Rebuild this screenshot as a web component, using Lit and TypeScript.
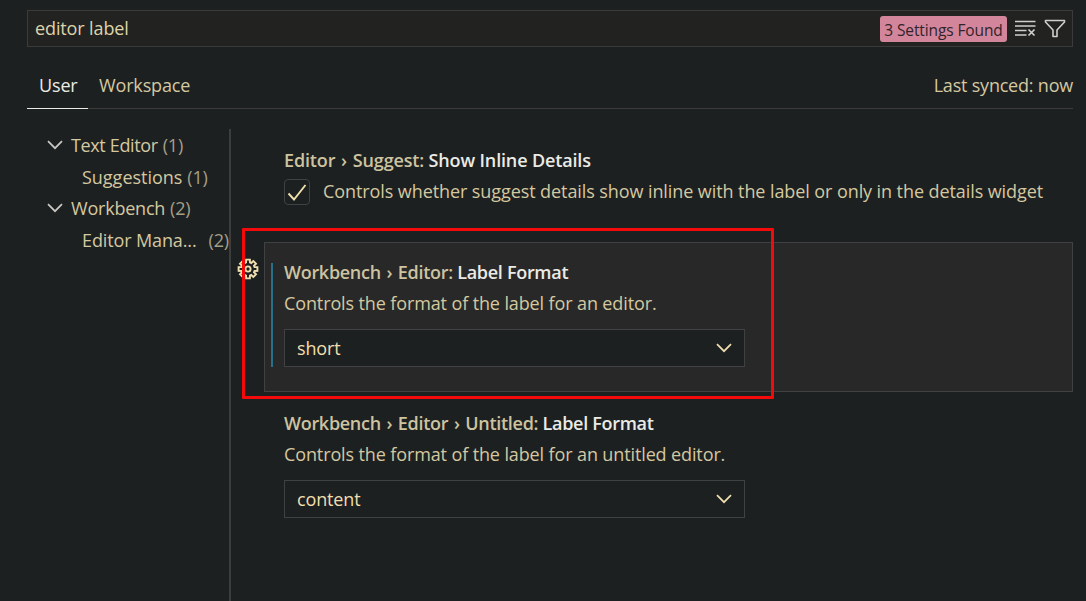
import { LitElement, html, css } from "lit";
import { customElement, property } from "lit/decorators.js";

const chevron = html`<svg class="chevron" width="18" height="12" viewBox="0 0 18 12"><path d="M2 2.2 9 9.2 16 2.2" fill="none" stroke="currentColor" stroke-width="1.7"/></svg>`;

const gearPath = (() => {
  const pts: string[] = [];
  for (let i = 0; i < 8; i++) {
    const a = (i * Math.PI) / 4;
    for (const [r, d] of [[6.8, -0.29], [9.6, -0.2], [9.6, 0.2], [6.8, 0.29]]) {
      pts.push(`${(11 + r * Math.cos(a + d)).toFixed(2)} ${(11 + r * Math.sin(a + d)).toFixed(2)}`);
    }
  }
  return `M${pts.join("L")}Z`;
})();

@customElement("setting-item")
class SettingItem extends LitElement {
  @property() category = "";
  @property() label = "";
  @property() description = "";
  @property() value = "";
  @property({ type: Boolean, reflect: true }) focused = false;
  @property({ type: Boolean, reflect: true }) checkbox = false;

  static styles = css`
    :host { display: block; box-sizing: border-box; position: relative; height: 151px; padding: 14px 19px 0; border: 1px solid transparent; color: #d4c8a0; }
    :host([focused]) { background: #282828; border-color: #3f4142; height: 150px; }
    :host(:not([focused]):not([checkbox])) { padding-top: 15px; }
    .title { height: 31px; line-height: 30px; font-weight: 600; color: #cdc3a0; white-space: pre; letter-spacing: -0.3px; }
    .title b { font-weight: 600; color: #ebebe6; }
    :host([checkbox]) .title { letter-spacing: -0.15px; }
    .sep { margin: 0 1.3px; }
    .desc { display: flex; align-items: center; height: 30px; white-space: pre; letter-spacing: -0.12px; }
    :host([checkbox]) .desc { letter-spacing: -0.085px; }
    .check { box-sizing: border-box; width: 26px; height: 26px; border: 1px solid #3f4142; border-radius: 4px; margin: 2px 13px 0 0; color: #f0dfae; }
    .check svg { display: block; }
    .select { box-sizing: border-box; display: flex; align-items: center; justify-content: space-between; width: 461px; height: 38px; margin-top: 11px; padding: 0 11px 0 12px; border: 1px solid #3f4142; background: #1d2021; color: #f0dfae; letter-spacing: -0.15px; }
    .modified { position: absolute; left: 6px; top: 20px; width: 2px; height: 104px; background: #27708a; }
    .gear { position: absolute; left: -28px; top: 15px; color: #f0dfae; }
  `;

  render() {
    const parts = this.category.split("›");
    return html`
      ${this.focused ? html`<div class="modified"></div>
        <svg class="gear" width="22" height="22" viewBox="0 0 22 22" fill="none" stroke="currentColor" stroke-width="1.9"><path d=${gearPath}/><circle cx="11" cy="11" r="2.6"/></svg>` : null}
      <div class="title">${parts.map((p, i) => html`${i ? html`<span class="sep">›</span>` : null}${p}`)} <b>${this.label}</b></div>
      <div class="desc">${this.checkbox ? html`<span class="check"><svg width="24" height="24" viewBox="0 0 24 24"><path d="M3.500 13.500 9 19.500 20.500 5" fill="none" stroke="currentColor" stroke-width="1.9"/></svg></span>` : null}<span>${this.description}</span></div>
      ${this.checkbox ? null : html`<div class="select"><span>${this.value}</span>${chevron}</div>`}
    `;
  }
}

@customElement("app-root")
class AppRoot extends LitElement {
  static styles = css`
    :host { display: block; position: relative; box-sizing: border-box; width: 1086px; height: 601px; overflow: hidden; padding: 10px 13px 0 27px; background: #1d2021; color: #d4c8a0; font: 18px "Open Sans", sans-serif; }
    .search { box-sizing: border-box; display: flex; align-items: center; height: 37px; padding: 0 6px 0 7px; border: 1px solid #3a3b3a; background: #222321; color: #dfd3aa; }
    .query { flex: 1; padding-bottom: 2px; letter-spacing: -0.12px; }
    .badge { display: flex; align-items: center; justify-content: center; width: 127px; height: 26px; padding-top: 2px; box-sizing: border-box; border-radius: 3px; background: #d3869b; color: #32232a; font-size: 15.500px; letter-spacing: -0.12px; white-space: nowrap; }
    .actions { display: flex; gap: 8px; margin-left: 8px; color: #cfcfcc; }
    .tabs { box-sizing: border-box; display: flex; height: 46px; margin-top: 16px; border-bottom: 1px solid #3a3b3a; line-height: 44px; }
    .tab { letter-spacing: -0.15px; white-space: nowrap; }
    .tab.active { box-sizing: border-box; width: 61px; height: 46px; margin-right: 11px; padding: 0 0 0 12px; border-bottom: 1px solid #ebebe6; color: #ebebe6; }
    .sync { margin-left: auto; letter-spacing: -0.21px; }
    .body { display: grid; grid-template-columns: 204px 1fr; margin-top: 20px; height: 472px; }
    .tree { border-right: 2px solid #3c3d3d; }
    .row { display: flex; align-items: center; height: 31.700px; padding-left: 19px; white-space: pre; }
    .row .chevron { margin-right: 7px; color: #c8c8c4; }
    .row.child { padding-left: 55px; }
    .t1 { letter-spacing: -0.36px; }
    .t2 { letter-spacing: -0.02px; }
    .t3 { letter-spacing: -0.22px; }
    .t4 { letter-spacing: -0.12px; }
    .count { color: #a59f88; margin-left: 5px; letter-spacing: -0.2px; }
    .wide { margin-left: 12px; }
    .settings { padding: 1px 0 0 33px; }
    .first { height: 112px; }
    .outline { position: absolute; left: 242px; top: 228px; width: 532px; height: 171px; box-sizing: border-box; border: 3px solid #f40a0a; border-radius: 1px; z-index: 2; }
  `;

  render() {
    return html`
      <div class="search">
        <span class="query">editor label</span>
        <span class="badge"><span>3 Settings Found</span></span>
        <span class="actions">
          <svg width="21" height="20" viewBox="0 0 21 20" fill="none" stroke="currentColor" stroke-width="1.7"><path d="M0 2.500H20.500M0 7H20.500M0 11.500H11.500M0 16H11.500M13.500 10.500 19.500 16.500M19.500 10.500 13.500 16.500"/></svg>
          <svg width="22" height="20" viewBox="0 0 22 20" fill="none" stroke="currentColor" stroke-width="1.600" stroke-linejoin="round"><path d="M1.500 1.500H20.500V3L13 11V17.500H9V11L1.500 3Z"/></svg>
        </span>
      </div>
      <div class="tabs"><span class="tab active">User</span><span class="tab">Workspace</span><span class="sync">Last synced: now</span></div>
      <div class="body">
        <div class="tree">
          <div class="row">${chevron}<span class="t1">Text Editor</span><span class="count">(1)</span></div>
          <div class="row child"><span class="t2">Suggestions</span><span class="count">(1)</span></div>
          <div class="row">${chevron}<span class="t3">Workbench</span><span class="count">(2)</span></div>
          <div class="row child"><span class="t4">Editor Mana...</span><span class="count wide">(2)</span></div>
        </div>
        <div class="settings">
          <setting-item class="first" checkbox category="Editor › Suggest:" label="Show Inline Details" description="Controls whether suggest details show inline with the label or only in the details widget"></setting-item>
          <setting-item focused category="Workbench › Editor:" label="Label Format" description="Controls the format of the label for an editor." value="short"></setting-item>
          <setting-item category="Workbench › Editor › Untitled:" label="Label Format" description="Controls the format of the label for an untitled editor." value="content"></setting-item>
        </div>
      </div>
      <div class="outline"></div>
    `;
  }
}
